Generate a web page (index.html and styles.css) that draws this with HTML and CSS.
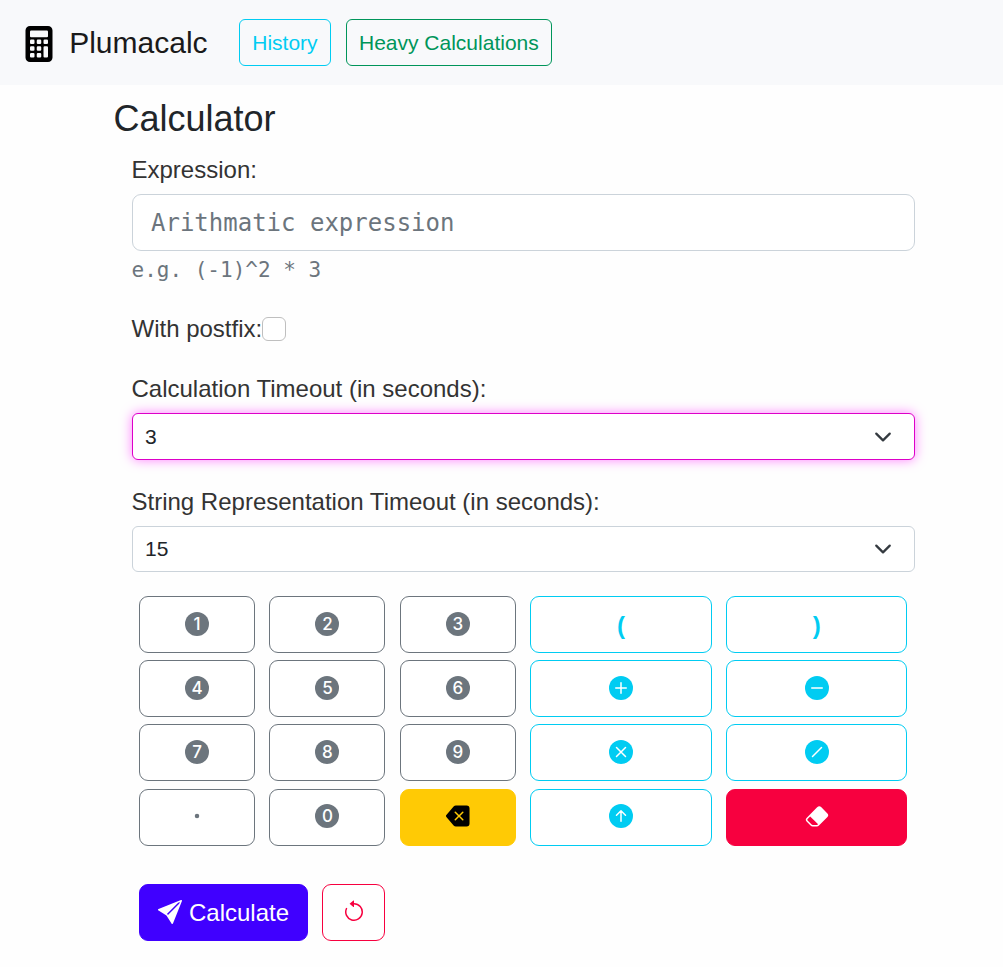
FILE: index.html
```html
<!DOCTYPE html>
<html lang="en">
<head>
<meta charset="utf-8">
<title>Plumacalc</title>
<link rel="stylesheet" href="styles.css">
</head>
<body>
<header class="navbar">
  <a class="brand">
    <svg class="brand-icon" viewBox="0 0 16 16" fill="#000"><path d="M2 2a2 2 0 0 1 2-2h8a2 2 0 0 1 2 2v12a2 2 0 0 1-2 2H4a2 2 0 0 1-2-2V2zm2 .5v2a.5.5 0 0 0 .5.5h7a.5.5 0 0 0 .5-.5v-2a.5.5 0 0 0-.5-.5h-7a.5.5 0 0 0-.5.5zm0 4v1a.5.5 0 0 0 .5.5h1a.5.5 0 0 0 .5-.5v-1a.5.5 0 0 0-.5-.5h-1a.5.5 0 0 0-.5.5zM4.500 9a.5.5 0 0 0-.5.5v1a.5.5 0 0 0 .5.5h1a.5.5 0 0 0 .5-.5v-1a.5.5 0 0 0-.5-.5h-1zM4 12.500v1a.5.5 0 0 0 .5.5h1a.5.5 0 0 0 .5-.5v-1a.5.5 0 0 0-.5-.5h-1a.5.5 0 0 0-.5.5zM7.500 6a.5.5 0 0 0-.5.5v1a.5.5 0 0 0 .5.5h1a.5.5 0 0 0 .5-.5v-1a.5.5 0 0 0-.5-.5h-1zM7 9.500v1a.5.5 0 0 0 .5.5h1a.5.5 0 0 0 .5-.5v-1a.5.5 0 0 0-.5-.5h-1a.5.5 0 0 0-.5.5zm.5 2.500a.5.5 0 0 0-.5.5v1a.5.5 0 0 0 .5.5h1a.5.5 0 0 0 .5-.5v-1a.5.5 0 0 0-.5-.5h-1zM10 6.500v1a.5.5 0 0 0 .5.5h1a.5.5 0 0 0 .5-.5v-1a.5.5 0 0 0-.5-.5h-1a.5.5 0 0 0-.5.5zm.5 2.500a.5.5 0 0 0-.5.5v4a.5.5 0 0 0 .5.5h1a.5.5 0 0 0 .5-.5v-4a.5.5 0 0 0-.5-.5h-1z"/></svg>
    <span>Plumacalc</span>
  </a>
  <nav class="nav-links">
    <a class="nav-btn info">History</a>
    <a class="nav-btn success">Heavy Calculations</a>
  </nav>
</header>
<main class="container">
  <h1 class="title">Calculator</h1>
  <form class="form">
    <label class="label" for="expr">Expression:</label>
    <input class="expr" id="expr" type="text" placeholder="Arithmatic expression">
    <div class="hint">e.g. (-1)^2 * 3</div>
    <div class="check-row">
      <label class="label" for="postfix">With postfix:</label><input class="check" id="postfix" type="checkbox">
    </div>
    <label class="label" for="calc-timeout">Calculation Timeout (in seconds):</label>
    <div class="select focused" id="calc-timeout"><span>3</span><svg class="chevron" viewBox="0 0 16 16"><path d="m2 5 6 6 6-6"/></svg></div>
    <label class="label second" for="str-timeout">String Representation Timeout (in seconds):</label>
    <div class="select" id="str-timeout"><span>15</span><svg class="chevron" viewBox="0 0 16 16"><path d="m2 5 6 6 6-6"/></svg></div>

    <div class="keypad">
      <button type="button" class="key"><span class="digit">1</span></button>
      <button type="button" class="key"><span class="digit">2</span></button>
      <button type="button" class="key"><span class="digit">3</span></button>
      <button type="button" class="key op paren">(</button>
      <button type="button" class="key op paren">)</button>

      <button type="button" class="key"><span class="digit">4</span></button>
      <button type="button" class="key"><span class="digit">5</span></button>
      <button type="button" class="key"><span class="digit">6</span></button>
      <button type="button" class="key op"><svg class="icon sign" viewBox="0 0 16 16"><circle cx="8" cy="8" r="8"/><path d="M8 4.500v7M4.500 8h7"/></svg></button>
      <button type="button" class="key op"><svg class="icon sign" viewBox="0 0 16 16"><circle cx="8" cy="8" r="8"/><path d="M4.500 8h7"/></svg></button>

      <button type="button" class="key"><span class="digit">7</span></button>
      <button type="button" class="key"><span class="digit">8</span></button>
      <button type="button" class="key"><span class="digit">9</span></button>
      <button type="button" class="key op"><svg class="icon sign" viewBox="0 0 16 16"><circle cx="8" cy="8" r="8"/><path d="m5 5 6 6M11 5l-6 6"/></svg></button>
      <button type="button" class="key op"><svg class="icon sign" viewBox="0 0 16 16"><circle cx="8" cy="8" r="8"/><path d="m5 11 6-6"/></svg></button>

      <button type="button" class="key"><svg class="icon" viewBox="0 0 16 16"><circle cx="8" cy="8" r="1.500"/></svg></button>
      <button type="button" class="key"><span class="digit">0</span></button>
      <button type="button" class="key warning"><svg class="icon" viewBox="0 0 16 16"><path d="M15.683 3a2 2 0 0 0-2-2h-7.080a2 2 0 0 0-1.519.698L.241 7.350a1 1 0 0 0 0 1.302l4.843 5.650A2 2 0 0 0 6.603 15h7.080a2 2 0 0 0 2-2V3zM5.829 5.854a.5.5 0 1 1 .707-.708l2.147 2.147 2.146-2.147a.5.5 0 1 1 .707.708L9.390 8l2.146 2.146a.5.5 0 0 1-.707.708L8.683 8.707l-2.147 2.147a.5.5 0 0 1-.707-.708L7.976 8 5.829 5.854z"/></svg></button>
      <button type="button" class="key op"><svg class="icon sign" viewBox="0 0 16 16"><circle cx="8" cy="8" r="8"/><path d="M8 11.500v-7M5 7.500l3-3 3 3"/></svg></button>
      <button type="button" class="key danger"><svg class="icon" viewBox="0 0 16 16"><path d="M8.086 2.207a2 2 0 0 1 2.828 0l3.879 3.879a2 2 0 0 1 0 2.828l-5.500 5.500A2 2 0 0 1 7.879 15H5.120a2 2 0 0 1-1.414-.586l-2.500-2.500a2 2 0 0 1 0-2.828l6.879-6.879zm.66 11.340L3.453 8.254 1.914 9.793a1 1 0 0 0 0 1.414l2.500 2.500a1 1 0 0 0 .707.293H7.880a1 1 0 0 0 .707-.293l.16-.16z"/></svg></button>
    </div>

    <div class="actions">
      <button type="button" class="key primary"><svg class="icon" viewBox="0 0 16 16"><path d="M15.964.686a.5.5 0 0 0-.65-.65L.767 5.855H.766l-.452.180a.5.5 0 0 0-.082.887l.410.260.001.002 4.995 3.178 3.178 4.995.002.002.260.410a.5.5 0 0 0 .886-.083l6-15Zm-1.833 1.890L6.637 10.070l-.215-.338a.5.5 0 0 0-.154-.154l-.338-.215 7.494-7.494 1.178-.471-.470 1.178Z"/></svg><span>Calculate</span></button>
      <button type="button" class="key reset"><svg class="icon" viewBox="0 0 16 16"><path d="M8 3a5 5 0 1 1-4.546 2.914.5.5 0 0 0-.908-.417A6 6 0 1 0 8 2v1z"/><path d="M8 4.466V.534a.25.25 0 0 0-.410-.192L5.230 2.308a.25.25 0 0 0 0 .384l2.360 1.966A.25.25 0 0 0 8 4.466z"/></svg></button>
    </div>
  </form>
</main>
</body>
</html>
```
FILE: styles.css
```css
* { box-sizing: border-box; }
body {
  margin: 0;
  height: 967px;
  overflow: hidden;
  background: #fefefe;
  color: #212529;
  font: 24px/36px "Liberation Sans", Arial, sans-serif;
}
.navbar {
  display: flex;
  align-items: center;
  height: 85px;
  padding: 0 20.500px;
  background: #f8f9fb;
}
.brand {
  display: flex;
  align-items: center;
  gap: 12.700px;
  margin-top: 2px;
  color: #1a1a1a;
  font-size: 30px;
}
.brand span { padding-bottom: 2px; }
.brand-icon { width: 36px; height: 36px; }
.nav-links { display: flex; gap: 15px; margin-left: 31.500px; }
.nav-btn {
  height: 47px;
  padding: 0 12.200px;
  border: 1px solid;
  border-radius: 6px;
  font-size: 21px;
  line-height: 46px;
}
.info { color: #00ccf2; }
.success { color: #00955a; }
.container { padding: 12px 88px 0 113.500px; }
.title { margin: 0; font-size: 36px; font-weight: 400; line-height: 43px; }
.form { padding-left: 18px; }
.label { display: block; margin-top: 12px; color: #333; }
.expr {
  display: block;
  width: 100%;
  height: 57px;
  margin-top: 6px;
  padding: 0 18.500px;
  border: 1px solid #cbd3da;
  border-radius: 9px;
  background: #fff;
  font: 24px "DejaVu Sans Mono", monospace;
}
.expr::placeholder { color: #6c757d; opacity: 1; }
.hint {
  height: 37px;
  color: #6c757d;
  font: 21px/39px "DejaVu Sans Mono", monospace;
}
.check-row { display: flex; align-items: center; height: 36px; margin: 23px 0 24px; }
.check-row .label { margin: 0; }
.check {
  width: 24px;
  height: 24px;
  margin: 0;
  appearance: none;
  border: 1px solid #bfbfbf;
  border-radius: 6px;
  background: #fff;
}
.check-row + .label { margin-top: 0; }
.second { margin-top: 24px; }
.select {
  display: flex;
  align-items: center;
  justify-content: space-between;
  height: 46px;
  margin-top: 6px;
  padding: 0 22px 0 12.500px;
  border: 1px solid #cbd3da;
  border-radius: 6px;
  background: #fff;
  font-size: 21px;
}
.focused {
  height: 47px;
  border-color: #dd00c8;
  box-shadow: 0 0 12px rgba(255, 0, 255, .5);
}
.chevron {
  width: 18px;
  height: 18px;
  fill: none;
  stroke: #343a40;
  stroke-width: 2;
  stroke-linecap: round;
  stroke-linejoin: round;
}
.keypad {
  display: grid;
  grid-template-columns: repeat(3, 116.050px) repeat(2, 181.400px);
  grid-auto-rows: 57px;
  gap: 7.250px 14.400px;
  margin: 23.800px 0 0 7.500px;
}
.key {
  display: flex;
  align-items: center;
  justify-content: center;
  height: 57px;
  padding: 0 0 1px;
  border: 1px solid;
  border-radius: 9px;
  background: #fff;
  color: #6c757d;
  font: 24px "Liberation Sans", Arial, sans-serif;
}
.icon { display: block; width: 24px; height: 24px; fill: currentColor; }
.sign path {
  fill: none;
  stroke: #fff;
  stroke-linecap: round;
  stroke-linejoin: round;
}
.digit {
  width: 24px;
  height: 24px;
  border-radius: 50%;
  background: #6c757d;
  color: #fff;
  font: 500 17px/24px Inter, sans-serif;
  text-align: center;
}
.op { color: #00ccf2; }
.paren { padding: 3px 0 0; font-weight: 700; }
.warning { border-color: #ffca05; background: #ffca05; color: #000; }
.danger { border-color: #f7003f; background: #f7003f; color: #fff; }
.actions { display: flex; gap: 14px; margin: 38px 0 0 7.500px; }
.primary {
  gap: 7px;
  width: 169px;
  border-color: #4000ff;
  background: #4000ff;
  color: #fff;
}
.primary span { padding-top: 2px; }
.reset { width: 63px; color: #f7003f; }
.keypad .key:nth-child(n+6) { padding-bottom: 1.500px; }
```
